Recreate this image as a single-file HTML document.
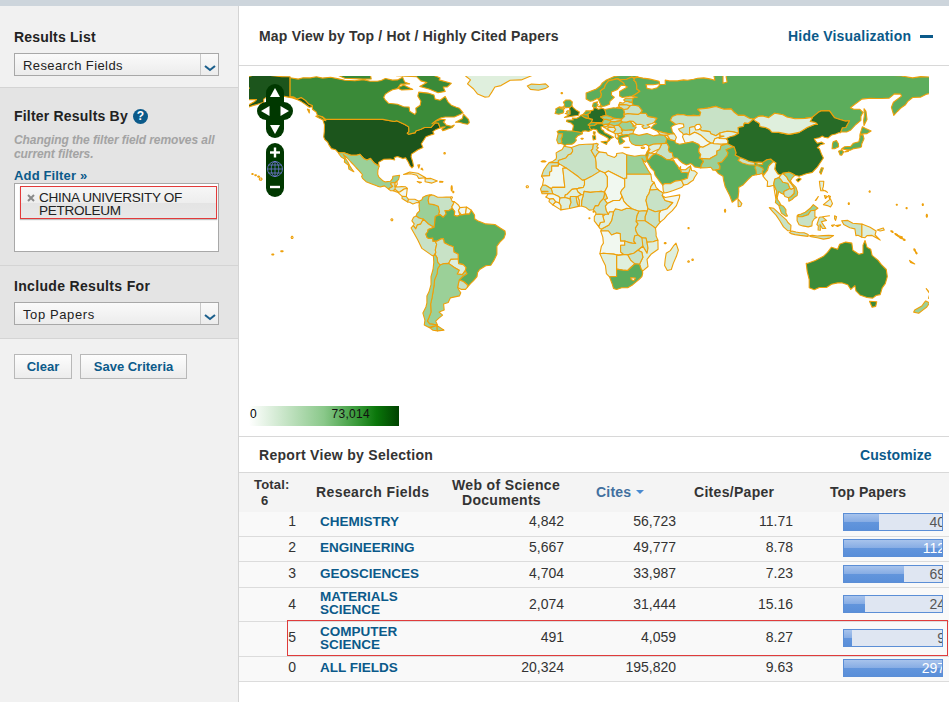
<!DOCTYPE html>
<html><head><meta charset="utf-8"><style>
*{margin:0;padding:0;box-sizing:border-box}
html,body{width:949px;height:702px;overflow:hidden;background:#fff;font-family:"Liberation Sans",sans-serif;color:#333}
.a{position:absolute;white-space:nowrap}
#top{left:0;top:0;width:949px;height:6px;background:#cdd5dc}
#side{left:0;top:6px;width:238px;height:696px;background:#f1f1f1}
#sideb{left:238px;top:6px;width:1px;height:696px;background:#d4d4d4}
.sec2{left:0;top:88px;width:238px;height:250px;background:#e4e4e4}
.hr{height:1px;background:#d4d4d4;left:0;width:238px}
.h{font-size:14px;font-weight:bold;color:#222;line-height:14px}
.sel{height:23px;width:205px;left:14px;border:1px solid #a8a8a8;background:linear-gradient(#fafafa,#ececec);font-size:13px;color:#222}
.sel span{position:absolute;left:8px;top:4px;letter-spacing:0.4px}
.sel i{position:absolute;right:0;top:0;width:18px;height:21px;border-left:1px solid #c8c8c8}
.lnk{color:#0b5a8a;font-weight:bold;font-size:13px;line-height:13px}
.btn{height:25px;border:1px solid #b8b8b8;background:linear-gradient(#fdfdfd,#ececec);color:#0b5a8a;font-weight:bold;font-size:13px;text-align:center}
.mh{font-size:14px;font-weight:bold;color:#333;line-height:14px;letter-spacing:0.2px}
.mhr{left:239px;width:710px;height:1px;background:#d8d8d8}
.th{font-size:14px;font-weight:bold;color:#333;line-height:16px}
.v{font-size:14px;color:#333;line-height:14px;text-align:right}
.f{font-size:13.5px;font-weight:bold;color:#0b5a8a;line-height:13px}
.bar{left:843px;width:100px;height:18px;border:1px solid #5b8ed6;background:#dfe6f2;overflow:hidden}
.bar b{position:absolute;left:0;top:0;bottom:0;background:linear-gradient(#a7c3ec 0%,#86ace4 50%,#6295dc 51%,#5a8fd9 100%)}
.bar span{position:absolute;right:-3px;top:1px;font-size:14px;line-height:14px;color:#555}
</style></head><body>
<div class="a" id="top"></div><div class="a" id="side"></div><div class="a sec2"></div><div class="a" id="sideb"></div><div class="a hr" style="top:87px"></div><div class="a hr" style="top:265px"></div><div class="a hr" style="top:338px"></div><div class="a h" style="left:14px;top:30.1px;letter-spacing:0.2px">Results List</div>
<div class="a sel" style="top:53px"><span>Research Fields</span><i></i></div><div class="a h" style="left:14px;top:109.1px;letter-spacing:0.2px">Filter Results By</div>
<div class="a" style="left:133px;top:109px;width:15px;height:15px;border-radius:50%;background:#0b5a8a;color:#fff;font-size:12px;font-weight:bold;text-align:center;line-height:15px">?</div><div class="a" style="left:14px;top:132.5px;width:210px;white-space:normal;font-size:12px;font-style:italic;font-weight:bold;color:#a3a3a3;line-height:14.5px;letter-spacing:-0.08px">Changing the filter field removes all current filters.</div><div class="a lnk" style="left:14px;top:168.5px;letter-spacing:0.15px">Add Filter »</div>
<div class="a" style="left:14px;top:183px;width:205px;height:69px;background:#fff;border:1px solid #a8a8a8"></div><div class="a h" style="left:14px;top:279.1px;letter-spacing:0.33px">Include Results For</div>
<div class="a sel" style="top:302px"><span style="letter-spacing:0.6px">Top Papers</span><i></i></div><div class="a btn" style="left:14px;top:354px;width:58px;line-height:23px">Clear</div><div class="a btn" style="left:80px;top:354px;width:107px;line-height:23px">Save Criteria</div><svg class="a" style="left:203px;top:62.5px" width="14" height="10"><path d="M2,3 L7,7 L12,3" fill="none" stroke="#1b5f8c" stroke-width="2.1"/></svg><svg class="a" style="left:203px;top:311.5px" width="14" height="10"><path d="M2,3 L7,7 L12,3" fill="none" stroke="#1b5f8c" stroke-width="2.1"/></svg><div class="a mh" style="left:259px;top:29.1px;">Map View by Top / Hot / Highly Cited Papers</div>
<div class="a mh lnkc" style="left:788px;top:29.1px;color:#0b5a8a">Hide Visualization</div>
<div class="a" style="left:920px;top:35px;width:13px;height:3px;background:#0b5a8a"></div><div class="a mhr" style="top:65px"></div><svg class="a" style="left:0;top:0" width="949" height="702" viewBox="0 0 949 702"><defs><clipPath id="mc"><rect x="249" y="76" width="680" height="320"/></clipPath></defs><g clip-path="url(#mc)" stroke="#eea00a" stroke-width="1.1" stroke-linejoin="round"><path fill="#1c551c" d="M323.1,120.6 324.5,124.9 324.3,131.6 323.7,136.9 324.9,139.7 327.6,142.1 328.8,144.6 331.4,148.6 335.7,149.8 338.5,152.9 343.4,152.5 350.9,155.3 356.6,155.3 360.0,154.3 364.1,158.8 366.9,160.0 370.4,158.4 374.2,163.0 379.1,166.3 378.5,162.4 383.9,159.2 390.4,159.0 394.7,160.0 394.3,157.6 397.5,156.5 402.8,158.6 405.6,157.8 408.3,162.0 410.1,165.9 411.9,167.9 413.6,166.1 412.5,161.0 411.1,156.9 411.5,154.1 415.4,151.5 418.0,149.8 422.9,147.4 421.3,143.8 422.7,141.7 425.9,136.7 432.0,134.6 434.0,134.0 432.8,131.6 436.1,129.4 440.1,127.9 438.5,123.3 435.7,122.7 434.0,124.1 431.0,127.5 424.5,127.5 420.9,129.2 415.8,131.0 415.4,132.6 408.7,134.2 407.3,133.2 408.9,131.6 408.7,126.9 404.8,124.5 396.7,120.8 394.3,121.5 382.9,119.4 325.9,119.4ZM290.1,76.8 290.1,96.5 294.1,97.1 297.1,99.1 301.2,97.5 305.5,100.4 308.7,104.0 312.4,105.4 312.4,106.7 309.3,107.3 305.3,104.2 301.2,101.6 298.2,100.0 292.5,97.9 287.0,96.9 279.9,95.5 273.8,97.1 268.8,98.7 269.8,95.1 266.7,97.1 263.7,99.1 263.7,102.2 257.6,104.2 247.5,107.3 241.8,108.5 247.5,105.6 254.6,101.6 256.6,99.6 247.5,99.8 243.4,97.1 240.8,95.5 242.4,92.1 246.4,90.0 249.5,88.0 244.4,87.8 238.3,87.8 235.3,85.8 242.4,83.9 247.5,85.0 247.9,82.9 243.4,81.9 238.3,80.3 245.4,77.4 251.5,75.6 258.2,74.2 267.7,75.2 281.9,76.6Z"/><path fill="#3a8a38" d="M290.1,77.7 298.2,79.1 303.2,77.7 310.3,77.9 316.4,76.8 322.5,78.1 330.6,77.2 338.7,78.9 344.8,80.3 354.9,80.7 363.1,79.7 370.2,81.3 377.3,81.3 381.3,80.5 385.4,78.5 392.5,80.1 397.5,79.9 402.6,77.2 404.6,81.9 409.7,83.9 400.6,84.1 397.5,88.6 392.5,89.8 388.4,92.1 385.4,94.1 383.7,97.3 385.0,99.6 388.4,103.2 397.5,104.2 403.6,106.7 409.1,107.1 409.7,111.3 414.8,114.4 416.2,112.3 415.8,108.3 420.2,105.2 420.9,101.2 417.8,96.1 418.8,92.1 428.0,93.1 434.0,95.1 435.1,99.1 440.1,100.2 445.2,96.5 448.2,102.2 451.3,105.2 456.3,107.3 459.4,108.3 463.0,112.7 460.0,114.6 454.3,117.0 445.2,117.0 441.1,117.8 436.5,120.2 432.0,123.7 435.1,121.5 441.1,119.2 445.2,119.6 444.6,121.1 443.2,121.9 445.0,123.5 446.2,125.1 451.3,126.3 454.3,125.1 452.3,127.5 446.2,129.6 442.8,130.6 441.7,129.0 445.2,126.9 442.2,127.1 440.1,127.9 438.5,123.3 435.7,122.7 434.0,124.1 431.0,127.5 424.5,127.5 420.9,129.2 415.8,131.0 415.4,132.6 408.7,134.2 407.3,133.2 408.9,131.6 408.7,126.9 404.8,124.5 396.7,120.8 394.3,121.5 382.9,119.4 325.9,119.4 322.5,116.8 317.4,115.4 316.4,112.3 312.4,109.3 312.4,106.7 312.4,105.4 308.7,104.0 305.5,100.4 301.2,97.5 297.1,99.1 294.1,97.1 290.1,96.5ZM325.9,120.8 322.5,119.8 315.8,116.2 318.4,115.6 322.9,117.6ZM455.5,122.3 462.4,118.4 463.4,114.2 468.5,119.4 469.3,122.5 467.5,124.3 463.4,123.5 459.4,122.3ZM445.2,91.4 438.1,92.7 429.0,89.0 419.8,86.4 426.9,82.5 420.9,80.9 416.8,76.8 396.5,75.8 393.5,69.7 413.8,69.3 430.0,73.8 440.1,77.9 439.1,79.9 451.3,83.3 447.2,87.0 443.2,87.0ZM371.2,78.9 363.1,79.1 344.8,78.3 334.7,73.8 337.7,71.2 346.8,70.8 365.1,70.4 370.2,73.8ZM322.5,73.8 329.6,74.4 339.7,67.7 324.5,67.7ZM401.6,90.0 412.7,89.4 403.6,85.0 397.5,88.0ZM381.3,74.8 387.4,72.8 383.3,68.7 373.2,69.7 377.3,74.8ZM309.3,109.7 307.3,109.1 309.3,112.9Z"/><path fill="#dfefdd" d="M428.0,60.6 442.2,64.7 458.4,65.7 463.4,73.8 466.5,76.8 470.5,79.9 467.5,83.9 473.6,89.0 477.6,94.1 484.7,97.1 488.8,96.7 491.8,92.1 494.9,87.0 501.0,85.6 510.1,80.3 521.2,79.9 531.4,75.8 531.4,70.8 538.5,64.7 535.4,56.6 515.2,50.5 474.6,51.5 450.3,52.5Z"/><path fill="#c8e2c6" d="M527.3,86.0 531.4,84.1 539.5,84.5 545.6,83.9 548.6,86.6 545.6,88.4 538.5,90.2 530.4,89.4Z"/><path fill="#9bd098" d="M338.5,152.9 343.4,152.5 350.9,155.3 356.6,155.3 360.0,154.3 364.1,158.8 366.9,160.0 370.4,158.4 374.2,163.0 379.1,166.3 377.9,170.1 377.7,174.2 378.9,177.2 383.3,181.1 385.4,181.9 390.4,181.3 392.5,178.6 392.9,176.2 399.6,175.2 398.6,179.3 396.9,181.3 395.1,182.7 391.5,182.7 390.6,183.9 392.7,186.4 389.0,188.4 389.0,189.4 384.4,185.9 380.3,187.0 377.3,186.1 371.2,183.7 366.1,181.7 362.5,178.4 361.6,176.2 362.7,175.0 359.2,170.9 356.0,167.5 353.9,165.1 350.9,162.0 347.2,158.0 343.2,154.5 345.8,159.0 347.9,162.0 349.9,166.1 351.9,169.1 353.9,171.8 352.3,171.1 348.9,169.1 348.3,165.1 344.4,162.0 344.6,159.0 341.4,157.1 339.3,154.5Z"/><path fill="#c8e2c6" d="M389.0,189.4 389.0,188.4 392.7,186.4 390.6,183.9 391.5,182.7 395.1,182.7 395.1,186.6 397.1,187.0 395.1,189.4 393.3,190.8 390.4,190.6Z"/><path fill="#f1f8f0" d="M395.1,182.7 396.9,181.3 397.3,184.3 395.7,186.6 395.1,186.6Z"/><path fill="#dfefdd" d="M395.1,186.6 397.1,187.0 401.6,186.6 405.6,186.8 407.3,188.4 404.2,189.0 400.2,191.8 398.6,192.4 395.1,189.4Z"/><path fill="#dfefdd" d="M395.1,189.4 398.6,192.4 396.5,192.0 393.3,190.8Z"/><path fill="#f1f8f0" d="M407.3,188.4 406.7,193.5 406.3,196.5 402.2,196.3 398.1,192.6 400.2,191.8 404.2,189.0Z"/><path fill="#c8e2c6" d="M406.3,196.5 408.5,199.3 407.7,202.0 402.0,198.5 402.2,196.3Z"/><path fill="#dfefdd" d="M408.5,199.3 414.8,199.3 418.8,201.2 419.4,202.8 416.8,202.6 412.9,204.0 409.7,202.2 407.7,202.0Z"/><path fill="#dfefdd" d="M403.6,174.4 409.7,172.0 417.8,173.2 425.7,177.8 418.8,178.4 416.8,175.2 410.7,173.8ZM425.1,178.6 431.0,178.4 437.3,181.1 432.0,183.1 425.1,181.7Z"/><path fill="#ffffff" d="M417.2,181.5 421.5,182.3 419.8,182.9ZM439.7,181.3 443.0,181.5 442.6,182.3 439.7,182.3ZM417.8,165.1 419.8,164.9 418.8,168.1ZM421.9,168.1 422.9,170.1 420.9,169.1Z"/><path fill="#9bd098" d="M419.4,202.8 418.8,201.2 421.9,199.7 422.9,197.3 425.5,195.9 429.6,194.7 431.4,194.9 429.0,196.5 428.2,200.3 429.0,203.8 433.8,204.6 438.3,206.2 439.5,211.7 438.5,215.1 435.3,216.6 434.2,227.3 432.6,226.5 428.0,223.7 423.3,219.2 419.0,218.0 416.2,216.0 417.0,213.5 419.6,210.9 419.0,205.6Z"/><path fill="#c8e2c6" d="M431.4,194.9 433.6,195.3 437.7,197.3 442.2,197.3 446.2,197.1 450.5,197.1 452.3,201.6 454.3,201.6 453.1,204.6 451.9,206.6 452.3,208.3 448.6,210.7 445.0,210.5 446.2,213.9 443.2,217.2 440.1,214.7 438.5,215.1 439.5,211.7 438.3,206.2 433.8,204.6 429.0,203.8 428.2,200.3 429.0,196.5Z"/><path fill="#f1f8f0" d="M454.3,201.6 458.4,205.0 460.0,207.6 458.4,210.7 459.8,214.9 457.2,216.2 454.3,215.4 454.7,211.5 452.3,208.3 451.9,206.6 453.1,204.6Z"/><path fill="#f1f8f0" d="M460.0,207.6 466.5,207.0 465.5,214.1 461.4,214.9 458.4,210.7Z"/><path fill="#f1f8f0" d="M466.5,207.0 471.4,210.3 469.5,214.1 465.5,214.1Z"/><path fill="#c8e2c6" d="M423.3,219.2 419.0,218.0 416.2,216.0 413.6,217.2 411.9,220.8 414.2,223.9 413.2,225.7 415.8,228.9 417.4,224.9 420.7,224.1Z"/><path fill="#c8e2c6" d="M428.0,223.7 432.6,226.5 434.2,227.3 428.2,229.5 427.6,232.0 425.9,234.0 426.9,237.1 428.6,238.5 432.8,238.1 433.0,241.1 435.1,241.1 436.7,244.2 435.3,250.2 435.9,252.3 433.4,256.1 431.2,254.9 421.9,248.4 417.8,240.1 414.2,233.4 411.1,227.9 413.2,225.7 415.8,228.9 417.4,224.9 420.7,224.1 423.3,219.2Z"/><path fill="#5cad5c" d="M471.4,210.3 474.6,215.1 474.6,218.8 477.6,220.8 485.8,223.9 494.9,224.5 501.0,228.5 505.0,231.0 505.4,234.0 504.0,238.1 499.9,242.1 496.9,246.2 496.9,254.3 493.9,260.4 490.8,265.2 485.8,265.8 479.7,269.5 477.6,272.5 477.0,276.6 473.6,280.7 470.5,283.7 467.5,287.1 467.3,284.7 463.4,281.5 459.2,280.0 463.0,276.2 466.9,273.8 465.3,270.7 465.9,267.5 463.2,264.6 458.6,263.6 458.4,259.4 458.2,254.3 453.9,251.9 453.3,246.8 449.2,245.2 444.2,242.7 443.4,238.7 440.9,238.9 436.7,241.3 435.1,241.1 433.0,241.1 432.8,238.1 428.6,238.5 426.9,237.1 425.9,234.0 427.6,232.0 428.2,229.5 434.2,227.3 435.3,216.6 438.5,215.1 440.1,214.7 443.2,217.2 446.2,213.9 445.0,210.5 448.6,210.7 452.3,208.3 454.7,211.5 454.3,215.4 457.2,216.2 459.8,214.9 461.4,214.9 465.5,214.1 469.5,214.1Z"/><path fill="#c8e2c6" d="M435.1,241.1 436.7,244.2 435.3,250.2 435.9,252.3 435.1,254.5 437.1,257.9 437.7,262.4 440.1,265.0 444.2,263.6 448.6,263.4 450.7,259.4 458.2,259.0 458.2,254.3 453.9,251.9 453.3,246.8 449.2,245.2 444.2,242.7 443.4,238.7 440.9,238.9 436.7,241.3Z"/><path fill="#dfefdd" d="M458.2,259.0 450.7,259.4 448.6,263.4 454.3,267.5 459.2,270.3 457.2,274.0 462.4,274.6 465.3,270.7 465.9,267.5 463.2,264.6 458.6,263.6Z"/><path fill="#c8e2c6" d="M459.2,280.0 463.4,281.5 467.3,284.7 467.5,287.1 465.5,289.4 461.4,289.4 457.6,287.5 458.4,283.7Z"/><path fill="#9bd098" d="M444.2,263.6 440.1,265.0 437.7,268.5 437.1,273.6 434.6,279.6 434.0,285.7 433.0,291.8 432.0,297.9 430.6,304.0 431.0,312.1 429.0,317.2 427.3,321.2 429.6,323.9 436.1,324.7 437.5,324.9 435.7,321.2 438.9,318.2 442.6,315.1 439.1,312.1 444.2,310.1 443.6,304.0 448.2,302.4 450.3,297.9 459.4,295.9 460.8,292.8 459.4,290.8 457.6,287.5 458.4,283.7 459.2,280.0 463.0,276.2 466.9,273.8 465.3,270.7 462.4,274.6 457.2,274.0 459.2,270.3 454.3,267.5 448.6,263.4ZM436.9,325.5 444.0,330.1 437.5,330.9 436.9,329.3Z"/><path fill="#9bd098" d="M435.1,254.5 433.4,256.1 433.8,262.4 433.0,269.5 431.0,276.6 431.0,284.7 429.0,291.8 426.9,295.9 426.9,303.0 425.9,307.0 422.9,313.1 424.9,320.2 424.3,324.9 430.0,327.9 436.9,325.5 436.1,324.7 429.6,323.9 427.3,321.2 429.0,317.2 431.0,312.1 430.6,304.0 432.0,297.9 433.0,291.8 434.0,285.7 434.6,279.6 437.1,273.6 437.7,268.5 440.1,265.0 437.7,262.4 437.1,257.9ZM436.9,325.5 436.9,329.3 437.5,330.9 433.0,330.3 429.0,327.3 433.0,326.3Z"/><path fill="#276b27" d="M564.4,117.4 568.9,116.8 578.6,115.2 579.4,111.9 576.4,110.3 573.0,107.3 571.9,105.6 569.9,107.3 569.5,108.3 569.9,110.7 569.9,114.2 569.5,114.6Z"/><path fill="#5cad5c" d="M571.9,105.6 571.9,105.2 572.3,102.0 569.9,100.0 565.9,100.0 563.4,102.2 564.6,104.6 563.8,106.4 566.3,107.7 569.9,107.3Z"/><path fill="#9bd098" d="M569.9,110.7 567.5,110.7 566.5,111.7 567.5,112.7 565.3,113.5 567.5,114.2 569.5,114.6 569.9,114.2Z"/><path fill="#9bd098" d="M564.8,108.7 563.4,106.9 561.2,107.3 559.8,108.3 561.8,109.1Z"/><path fill="#5cad5c" d="M563.8,111.3 563.2,112.9 558.8,114.2 555.1,113.5 556.1,110.3 555.7,108.9 559.2,106.9 561.2,107.3 559.8,108.3 561.8,109.1 563.4,109.3Z"/><path fill="#3a8a38" d="M581.1,115.2 584.5,117.4 587.8,118.4 592.6,119.4 591.4,122.3 588.2,124.9 590.2,125.7 589.4,127.3 591.4,130.0 588.6,131.4 585.1,130.8 582.3,131.4 582.1,132.8 572.3,131.0 573.6,125.5 570.9,122.9 566.5,121.5 566.9,120.0 573.2,120.0 572.3,118.0 576.4,118.4 579.0,117.0ZM593.4,131.8 595.3,132.0 594.7,134.8 593.4,133.8Z"/><path fill="#5cad5c" d="M582.1,132.8 572.3,131.0 566.9,130.8 559.8,130.2 557.1,131.6 558.2,133.6 562.6,133.8 561.8,137.7 561.0,138.7 561.8,141.7 560.8,143.4 563.2,144.2 564.6,145.8 566.9,144.4 571.9,144.2 574.6,142.5 576.4,140.1 575.4,138.7 577.8,135.7 582.5,133.8Z"/><path fill="#9bd098" d="M558.2,133.6 556.7,140.1 558.2,143.8 560.8,143.4 561.8,141.7 561.0,138.7 561.8,137.7 562.6,133.8Z"/><path fill="#5cad5c" d="M582.9,114.6 585.5,111.5 586.1,110.7 590.6,110.9 590.2,112.9 588.2,113.7 588.2,115.8 587.8,115.0 584.7,114.6Z"/><path fill="#5cad5c" d="M581.1,115.2 582.9,114.6 584.7,114.6 587.8,115.0 588.2,115.8 588.6,117.2 587.8,118.4 584.5,117.4Z"/><path fill="#276b27" d="M588.2,113.7 590.2,112.9 590.6,110.9 593.2,110.1 594.0,107.5 596.1,107.7 598.3,109.3 602.4,108.3 604.8,109.5 605.6,112.1 606.2,115.4 600.7,116.8 604.0,119.4 602.4,122.5 597.3,122.5 595.5,122.5 591.4,122.3 592.6,119.4 589.0,118.4 588.6,117.2 588.2,115.8Z"/><path fill="#5cad5c" d="M592.4,106.2 593.4,103.0 597.5,101.8 596.9,104.2 598.1,104.6 596.1,107.7 594.0,107.5ZM598.3,106.7 601.4,105.2 601.4,107.3Z"/><path fill="#5cad5c" d="M588.2,124.9 591.4,122.3 595.5,122.5 597.1,123.7 594.3,125.5 590.2,125.7Z"/><path fill="#9bd098" d="M595.5,122.5 602.4,122.5 604.0,119.4 606.4,119.4 610.3,120.2 610.7,121.5 609.5,123.5 608.4,124.1 603.8,124.5 600.7,123.5 597.1,123.7Z"/><path fill="#3a8a38" d="M590.2,125.7 594.3,125.5 597.1,123.7 600.7,123.5 603.8,124.5 603.8,126.3 600.9,126.9 601.4,129.4 603.6,130.6 604.4,132.6 608.4,134.6 613.5,137.3 610.5,138.7 609.5,140.3 607.6,141.7 608.4,138.7 607.4,137.7 604.4,136.1 601.4,134.6 598.3,132.6 596.7,129.8 593.2,129.0 591.4,130.0 589.4,127.3ZM601.1,141.7 607.6,141.1 606.6,144.4ZM592.6,135.7 595.5,135.7 595.7,139.3 593.2,139.9Z"/><path fill="#5cad5c" d="M586.1,99.1 590.2,101.2 593.2,100.6 597.3,98.5 598.3,99.4 600.9,97.1 601.4,94.1 600.3,91.0 604.4,88.0 605.4,85.0 608.4,80.9 612.5,79.9 616.6,78.9 620.6,79.7 626.7,79.3 631.8,77.0 634.8,77.9 638.5,77.2 632.8,74.6 624.7,74.8 614.5,76.4 606.4,79.9 602.4,82.9 600.3,86.0 596.3,89.0 591.2,91.0 586.1,93.1 586.1,97.1Z"/><path fill="#5cad5c" d="M598.3,99.4 600.9,105.2 602.4,106.4 605.0,106.0 609.5,104.2 609.9,101.4 614.3,97.3 611.5,95.1 611.5,92.1 617.6,89.4 621.2,85.2 624.7,85.4 623.7,82.9 617.6,78.7 616.6,78.9 612.5,79.9 608.4,80.9 605.4,85.0 604.4,88.0 600.3,91.0 601.4,94.1 600.9,97.1Z"/><path fill="#5cad5c" d="M619.6,96.1 622.4,97.5 629.7,96.3 632.4,96.1 634.8,94.7 639.9,91.2 636.8,89.0 636.8,85.6 635.8,81.9 633.8,80.3 634.6,78.9 631.8,77.0 626.7,79.3 620.6,79.7 617.6,78.7 623.7,82.9 624.7,85.4 627.3,87.0 619.6,91.4Z"/><path fill="#5cad5c" d="M604.8,109.5 613.5,107.7 622.2,108.5 623.7,109.5 624.5,112.3 623.7,114.4 624.7,116.4 621.8,119.2 614.3,118.4 610.5,116.8 606.2,115.4 605.6,112.1Z"/><path fill="#9bd098" d="M600.7,116.8 606.2,115.4 610.5,116.8 614.3,118.4 610.3,120.2 606.4,119.4 604.0,119.4Z"/><path fill="#c8e2c6" d="M610.3,120.2 614.3,118.4 621.8,119.2 621.0,120.6 614.1,121.9 610.7,121.5Z"/><path fill="#9bd098" d="M608.4,124.1 609.5,123.5 610.7,121.5 614.1,121.9 621.0,120.6 622.4,121.7 618.6,125.1 614.1,125.7 609.7,124.5Z"/><path fill="#c8e2c6" d="M603.8,124.5 608.4,124.1 609.7,124.5 606.8,126.5 603.8,126.3Z"/><path fill="#c8e2c6" d="M603.6,127.3 606.8,126.5 609.7,124.5 614.1,125.7 614.5,127.5 608.4,127.1 607.8,129.2 611.5,131.6 613.5,132.6 608.4,130.6 606.2,128.6Z"/><path fill="#dfefdd" d="M607.8,129.2 608.4,127.1 614.5,127.5 615.7,129.6 613.5,132.6 611.5,131.6Z"/><path fill="#c8e2c6" d="M614.1,125.7 618.6,125.1 621.8,128.6 621.4,129.6 622.6,131.2 621.4,133.0 617.8,133.8 615.3,133.8 613.5,132.6 615.7,129.6 614.5,127.5Z"/><path fill="#dfefdd" d="M615.3,133.8 617.8,133.8 618.6,137.7 616.6,138.5 615.3,137.1Z"/><path fill="#dfefdd" d="M617.8,133.8 621.4,133.0 622.6,135.0 618.6,135.9Z"/><path fill="#5cad5c" d="M616.6,138.5 618.6,137.7 618.6,135.9 622.6,135.0 629.3,134.2 628.7,136.1 623.7,137.3 621.6,137.7 622.6,139.7 624.7,141.3 621.6,143.8 619.6,144.2 618.6,141.7 618.6,139.7ZM623.7,147.2 629.3,147.4 625.7,147.8Z"/><path fill="#c8e2c6" d="M621.4,129.6 625.7,130.2 631.8,129.6 634.0,130.2 632.8,133.6 629.3,134.2 622.6,135.0 621.4,133.0 622.6,131.2Z"/><path fill="#9bd098" d="M618.6,125.1 622.4,121.7 626.5,122.1 629.9,121.1 633.2,124.5 633.2,126.5 636.2,127.1 634.0,130.2 631.8,129.6 625.7,130.2 621.4,129.6 621.8,128.6Z"/><path fill="#f1f8f0" d="M629.9,121.1 633.2,121.3 636.8,124.5 633.2,126.5 633.2,124.5Z"/><path fill="#c8e2c6" d="M621.0,120.6 621.8,119.2 624.7,116.4 623.7,114.4 627.7,113.5 637.9,114.4 640.5,113.1 646.0,113.3 648.0,116.4 653.5,117.4 657.1,118.2 654.1,122.5 652.0,123.5 647.0,124.9 650.0,126.9 647.0,128.1 643.9,128.6 641.9,126.7 643.9,125.5 639.9,124.3 636.8,124.5 633.2,121.3 629.9,121.1 626.5,122.1 622.4,121.7Z"/><path fill="#c8e2c6" d="M623.7,114.4 624.5,112.3 623.7,109.5 627.7,108.7 629.9,105.8 633.2,105.0 638.7,106.0 642.3,110.7 640.5,113.1 637.9,114.4 627.7,113.5Z"/><path fill="#c8e2c6" d="M618.6,105.2 619.2,106.9 622.2,108.5 623.7,109.5 627.7,108.7 629.9,105.8 626.7,104.8 620.6,104.4Z"/><path fill="#c8e2c6" d="M618.6,105.2 620.6,104.4 626.7,104.8 629.9,105.8 633.2,105.0 632.2,102.6 627.9,101.4 625.3,101.4 623.3,103.2 619.8,102.4Z"/><path fill="#9bd098" d="M623.7,100.0 625.3,101.4 627.9,101.4 632.2,102.6 632.8,98.1 625.7,98.1Z"/><path fill="#5cad5c" d="M632.8,98.1 632.2,102.6 633.2,105.0 638.7,106.0 642.3,110.7 640.5,113.1 646.0,113.3 648.0,116.4 653.5,117.4 657.1,118.2 654.1,122.5 656.5,123.5 653.5,125.1 652.0,126.9 651.0,127.9 656.1,130.6 657.1,130.8 663.2,132.6 670.3,134.0 674.4,134.0 672.3,131.6 671.7,128.6 670.9,127.9 672.3,126.1 674.4,125.1 676.0,124.5 673.3,122.5 670.3,120.4 672.3,116.4 677.4,114.4 683.5,114.8 687.5,115.8 693.6,115.4 699.7,115.8 700.7,112.3 697.7,109.3 707.8,108.1 715.9,106.4 724.0,109.3 731.1,108.9 734.2,112.3 738.2,115.4 744.3,115.4 749.4,118.2 753.5,119.2 758.5,116.4 762.6,116.0 768.7,117.6 774.7,113.3 782.9,114.8 786.9,117.0 795.0,118.8 805.2,118.4 812.3,117.4 818.3,112.3 821.4,110.7 829.5,110.9 834.6,117.8 840.7,119.8 845.7,121.1 849.4,120.8 845.7,127.5 842.3,127.7 840.7,132.0 841.7,132.0 846.7,132.0 850.8,130.0 855.9,124.5 860.9,120.4 860.9,116.4 863.0,112.3 859.9,109.3 853.8,109.3 850.4,107.7 854.9,104.2 861.9,99.1 870.1,98.3 877.2,98.5 882.2,98.5 889.3,98.1 894.4,93.9 900.5,94.1 901.5,96.1 893.4,102.2 891.4,107.3 893.8,115.4 897.4,111.5 900.5,108.3 905.5,104.8 907.6,101.6 912.6,97.5 920.8,97.1 926.8,94.1 936.0,92.1 939.0,92.5 943.1,87.0 943.1,78.9 932.9,77.2 920.8,76.6 912.6,77.9 900.5,75.8 884.3,75.0 874.1,72.2 859.9,71.8 839.6,74.8 835.6,71.8 823.4,70.8 805.2,69.5 799.1,63.0 778.8,63.7 754.5,66.7 738.2,69.7 739.3,73.8 738.2,71.8 728.1,72.8 726.1,76.8 727.1,81.9 723.0,83.3 723.0,78.9 723.0,72.8 718.0,70.8 713.9,75.8 714.9,80.3 709.8,78.9 703.8,77.9 697.7,78.3 693.6,79.3 687.5,80.3 683.5,79.9 677.4,80.9 669.3,80.9 665.2,80.1 665.2,84.5 660.2,84.5 657.1,87.8 652.0,89.2 647.0,88.4 646.0,84.5 653.1,84.7 659.6,83.7 659.1,81.3 649.0,78.9 642.9,78.1 638.5,77.2 634.8,77.9 634.6,78.9 633.8,80.3 635.8,81.9 636.8,85.6 636.8,89.0 639.9,91.2 634.8,94.7 632.4,96.1 634.8,96.7 637.4,97.2 634.8,97.5ZM864.0,108.7 866.0,111.3 867.0,119.4 864.0,125.5 863.6,120.4 864.4,115.4ZM616.6,107.5 622.2,108.5 619.2,106.9Z"/><path fill="#c8e2c6" d="M670.3,120.4 672.3,116.4 677.4,114.4 683.5,114.8 687.5,115.8 693.6,115.4 699.7,115.8 700.7,112.3 697.7,109.3 707.8,108.1 715.9,106.4 724.0,109.3 731.1,108.9 734.2,112.3 738.2,115.4 744.3,115.4 749.4,118.2 753.5,119.2 748.4,123.5 744.3,123.1 743.3,126.5 738.2,127.5 738.6,133.2 732.2,131.6 727.1,131.2 720.0,133.0 715.9,135.7 710.9,133.8 709.8,131.6 701.7,130.6 694.6,126.5 689.6,127.5 689.6,135.0 686.5,134.0 683.3,134.6 682.5,133.0 680.0,131.2 678.4,129.0 680.0,128.6 683.9,126.9 683.5,124.1 679.4,123.5 676.0,124.5 673.3,122.5Z"/><path fill="#dfefdd" d="M689.6,127.5 694.6,126.5 701.7,130.6 709.8,131.6 710.9,133.8 715.9,135.7 720.0,133.0 720.0,135.7 724.0,136.1 720.0,137.1 714.9,138.7 712.9,143.2 710.9,143.0 706.8,140.7 700.7,135.2 697.7,133.6 694.6,132.2 689.6,135.0Z"/><path fill="#f1f8f0" d="M683.3,134.6 682.5,136.7 683.5,139.1 685.3,143.2 692.6,141.7 698.7,144.6 700.1,146.6 702.8,147.2 706.8,145.2 710.9,143.0 706.8,140.7 700.7,135.2 697.7,133.6 694.6,132.2 689.6,135.0 686.5,134.0Z"/><path fill="#dfefdd" d="M720.0,133.0 727.1,131.2 732.2,131.6 738.6,133.2 734.2,135.7 726.1,138.7 719.0,138.5 720.0,137.1 724.0,136.1 720.0,135.7Z"/><path fill="#f1f8f0" d="M714.9,138.7 720.0,137.1 719.0,138.5 726.1,138.7 728.1,140.7 727.7,143.8 721.0,144.2 713.9,143.8 712.9,143.2Z"/><path fill="#dfefdd" d="M700.1,146.6 702.8,147.2 706.8,145.2 710.9,143.0 712.9,143.2 713.9,143.8 721.0,144.2 727.7,143.8 721.0,145.8 720.0,149.8 716.9,150.9 716.9,154.7 710.9,158.0 709.8,159.0 700.7,158.4 699.3,158.2 700.7,154.9 698.7,151.9 698.7,148.8Z"/><path fill="#9bd098" d="M700.7,158.4 703.4,161.4 701.1,165.1 700.7,167.9 706.8,167.7 710.9,167.3 712.9,170.1 715.5,170.1 719.8,169.1 720.0,166.1 718.0,163.0 722.0,162.0 725.1,158.2 727.1,155.9 728.1,152.9 726.1,149.8 733.8,146.8 727.7,143.8 721.0,145.8 720.0,149.8 716.9,150.9 716.9,154.7 710.9,158.0 709.8,159.0Z"/><path fill="#5cad5c" d="M715.5,170.1 718.0,173.2 723.0,176.2 723.6,180.3 725.1,186.4 727.1,190.4 729.7,195.5 732.2,202.2 734.2,200.8 738.0,197.9 738.8,191.4 738.6,187.4 743.3,184.7 748.0,179.7 752.0,175.8 756.5,174.6 761.6,173.2 763.6,175.2 765.2,173.2 767.6,170.1 768.7,166.1 773.5,161.4 770.7,159.0 766.6,159.8 762.6,162.4 758.1,162.0 754.5,162.4 746.4,163.0 738.2,160.4 740.3,157.6 735.2,154.9 736.2,152.9 734.2,146.8 733.8,146.8 726.1,149.8 728.1,152.9 727.1,155.9 725.1,158.2 722.0,162.0 718.0,163.0 720.0,166.1 719.8,169.1Z"/><path fill="#c8e2c6" d="M738.2,160.4 740.3,157.6 745.3,159.6 749.4,161.4 754.5,162.2 754.5,165.1 748.4,164.7 742.3,163.0Z"/><path fill="#dfefdd" d="M756.5,164.0 758.1,162.0 762.6,162.4 762.6,164.4Z"/><path fill="#9bd098" d="M756.5,174.6 755.9,169.5 754.9,168.1 755.5,165.5 758.1,165.7 762.6,168.1 763.6,170.1 762.2,171.1 763.6,176.2 761.6,173.2 759.5,174.2Z"/><path fill="#c8e2c6" d="M738.0,198.9 741.9,203.6 740.7,206.2 738.2,206.6Z"/><path fill="#276b27" d="M726.1,138.7 728.1,140.7 727.7,143.8 733.8,146.8 734.2,146.8 736.2,152.9 735.2,154.9 740.3,157.6 745.3,159.6 749.4,161.4 754.5,162.2 758.1,162.0 762.6,162.4 766.6,159.8 770.7,159.0 773.5,161.4 775.8,163.0 774.7,169.1 777.8,174.0 780.8,175.2 782.9,173.4 788.9,172.2 792.0,173.6 795.0,175.2 799.1,176.2 802.1,175.2 806.2,173.8 812.3,172.4 817.3,167.1 819.4,164.0 823.4,158.0 821.4,153.9 819.4,148.8 817.3,147.8 820.4,144.8 824.4,143.8 821.4,142.1 817.3,143.2 815.3,140.7 814.3,138.7 819.4,137.7 822.4,136.1 824.4,137.3 828.1,137.9 831.5,135.0 835.6,134.0 838.6,132.8 840.7,132.6 840.7,132.0 842.3,127.7 845.7,127.5 849.4,120.8 845.7,121.1 840.7,119.8 834.6,117.8 829.5,110.9 821.4,110.7 818.3,112.3 812.3,117.4 812.3,117.8 810.2,121.5 815.3,122.5 817.3,124.5 814.3,124.5 807.2,127.5 802.1,130.6 799.1,132.4 793.0,133.6 788.9,134.4 778.8,132.4 771.7,132.0 769.7,129.6 765.6,127.5 759.9,126.5 759.5,123.5 754.5,120.4 753.5,119.2 748.4,123.5 744.3,123.1 743.3,126.5 738.2,127.5 738.6,133.2 734.2,135.7 730.1,136.7ZM796.2,179.9 799.1,178.0 801.1,179.1 798.1,181.9Z"/><path fill="#dfefdd" d="M754.1,119.0 758.5,116.4 762.6,116.0 768.7,117.6 774.7,113.3 782.9,114.8 786.9,117.0 795.0,118.8 805.2,118.4 812.3,117.4 812.3,117.8 810.2,121.5 815.3,122.5 817.3,124.5 814.3,124.5 807.2,127.5 802.1,130.6 799.1,132.4 793.0,133.6 788.9,134.4 778.8,132.4 771.7,132.0 769.7,129.6 765.6,127.5 759.9,126.5 759.5,123.5 754.5,120.4Z"/><path fill="#5cad5c" d="M833.2,141.7 836.4,140.5 838.4,143.8 838.6,146.8 834.6,148.8 832.1,148.8 832.5,143.8Z"/><path fill="#5cad5c" d="M841.7,148.8 844.7,146.8 850.8,146.4 853.4,143.2 858.9,141.7 859.9,137.7 859.9,135.0 863.0,135.0 864.0,138.7 861.7,144.0 861.5,146.8 859.5,147.8 853.8,148.6 850.2,150.3 844.7,149.4ZM838.6,151.3 841.7,149.8 843.7,151.9 841.7,155.3 840.0,154.9ZM844.7,151.9 849.2,149.4 848.2,151.5ZM859.9,134.6 862.4,126.7 865.6,128.4 871.1,131.0 867.0,133.6 861.9,134.0Z"/><path fill="#5cad5c" d="M821.4,167.7 823.4,168.1 821.0,174.2 819.6,172.2Z"/><path fill="#ffffff" d="M694.6,126.5 696.7,124.5 699.7,124.3 701.3,127.5 698.7,129.6 695.7,130.0Z"/><path fill="#f1f8f0" d="M763.0,176.2 765.2,173.2 767.6,170.1 768.7,166.1 773.5,161.4 775.8,163.0 774.7,169.1 777.8,174.0 780.8,175.2 779.0,177.4 774.7,179.3 773.7,184.3 775.1,187.4 776.8,191.4 776.0,198.5 775.8,198.5 774.7,192.4 773.7,185.3 769.7,186.4 767.2,186.4 767.6,181.3 765.6,179.3Z"/><path fill="#9bd098" d="M779.0,177.4 780.8,179.3 782.9,182.3 787.9,183.3 790.0,188.4 783.9,191.4 783.9,194.5 780.8,193.0 778.8,191.4 777.2,197.5 777.8,200.1 779.4,202.0 780.8,205.0 779.0,205.6 775.4,202.6 776.0,198.5 776.8,191.4 775.1,187.4 773.7,184.3 774.7,179.3Z"/><path fill="#dfefdd" d="M779.0,177.4 780.8,175.2 782.9,173.4 786.9,177.2 787.9,179.3 791.0,183.3 794.2,188.0 791.0,189.4 790.0,188.4 787.9,183.3 782.9,182.3 780.8,179.3Z"/><path fill="#9bd098" d="M782.9,173.4 788.9,172.2 792.0,173.6 795.0,175.2 792.0,178.2 790.4,180.7 792.0,183.3 796.0,187.4 797.7,192.4 797.1,195.5 794.0,197.5 792.0,199.5 788.9,201.2 788.5,197.7 791.0,196.5 794.0,193.5 794.2,188.0 791.0,183.3 787.9,179.3 786.9,177.2Z"/><path fill="#c8e2c6" d="M783.9,194.5 784.9,196.5 788.5,197.7 791.0,196.5 794.0,193.5 794.2,188.0 791.0,189.4 790.0,188.4 783.9,191.4Z"/><path fill="#9bd098" d="M779.0,205.6 780.8,205.0 783.3,206.2 785.9,209.7 785.9,213.1 787.5,216.0 785.9,216.2 781.4,213.1 779.4,207.6ZM798.3,214.7 801.1,214.1 805.2,212.3 810.2,208.3 813.3,204.6 817.9,208.3 814.9,210.3 810.8,210.7 808.2,214.7 802.1,216.8 798.3,216.8Z"/><path fill="#c8e2c6" d="M797.1,215.8 798.3,214.7 798.3,216.8 802.1,216.8 808.2,214.7 810.8,210.7 814.9,210.3 814.9,216.8 816.9,217.2 814.3,218.8 812.3,221.8 811.9,225.9 808.2,226.9 802.7,225.9 799.1,224.7 797.1,220.8ZM769.3,207.6 773.7,208.3 779.4,213.7 786.3,219.8 787.9,222.5 791.0,225.3 790.6,230.6 787.9,230.8 783.5,226.9 779.8,220.8 776.2,215.4 772.7,211.7ZM789.3,232.6 792.0,231.0 796.0,232.0 800.1,232.8 804.1,232.8 808.2,234.4 808.0,236.4 800.1,235.4 795.0,234.6 791.0,233.6ZM818.1,230.0 820.4,230.2 820.0,224.5 822.4,228.5 825.8,228.5 823.4,224.9 821.4,221.8 826.5,220.4 822.4,216.8 829.5,215.8 819.4,217.2 818.8,218.8 816.9,224.5 818.3,225.9ZM809.2,235.8 812.3,235.4 817.3,236.0 823.4,235.6 828.5,235.4 833.6,235.6 829.5,238.1 823.4,239.1 817.3,237.7 811.2,236.8ZM834.6,215.8 836.6,216.8 835.6,220.4 834.6,218.8ZM831.5,225.3 834.6,224.9 832.5,226.5ZM835.6,225.5 840.7,224.9 837.6,226.5ZM841.7,220.8 847.8,220.4 852.8,223.3 861.9,224.1 861.9,237.3 857.9,235.2 855.9,235.6 854.9,228.9 849.8,227.7 843.7,224.5Z"/><path fill="#dfefdd" d="M861.9,224.1 870.1,227.3 876.1,231.0 875.1,235.0 880.2,240.1 872.1,235.4 867.0,235.6 865.0,237.7 861.9,237.3ZM877.2,230.0 883.2,227.9 884.3,230.0 880.2,231.0Z"/><path fill="#dfefdd" d="M819.4,181.3 823.8,181.3 823.4,186.4 822.4,189.4 827.5,192.4 825.4,190.8 820.8,190.8 820.0,186.4ZM823.4,204.6 830.5,198.9 832.5,203.6 830.5,207.0 827.5,205.6ZM824.4,195.5 827.5,196.5 825.4,198.5ZM828.5,195.5 830.5,196.5 829.5,198.5ZM815.3,200.5 818.3,196.5 816.3,200.1Z"/><path fill="#9bd098" d="M629.3,134.2 632.8,133.6 638.9,135.4 647.0,133.6 653.7,135.9 660.2,134.6 664.4,135.4 666.9,138.3 665.8,143.4 661.8,143.6 653.1,144.2 650.0,145.4 649.0,146.2 646.0,144.2 641.9,145.6 635.8,145.4 631.8,143.8 629.7,140.7 629.3,137.7 628.7,136.1Z"/><path fill="#c8e2c6" d="M657.1,130.8 663.2,132.6 670.3,134.0 667.3,135.2 664.4,135.4 660.2,134.6Z"/><path fill="#dfefdd" d="M664.4,135.4 667.3,135.2 670.3,139.9 666.9,138.3Z"/><path fill="#dfefdd" d="M667.3,135.2 670.3,134.0 674.4,134.0 676.4,137.3 675.0,140.9 670.3,139.9Z"/><path fill="#5cad5c" d="M666.9,138.3 670.3,139.9 675.0,140.9 675.4,142.8 679.4,144.2 685.3,143.2 692.6,141.7 698.7,144.6 700.1,146.6 698.7,148.8 698.7,151.9 700.7,154.9 699.3,158.2 700.7,158.4 703.4,161.4 701.1,165.1 700.7,167.9 694.6,166.9 692.2,164.4 690.6,163.6 686.5,165.1 682.5,163.0 679.0,160.0 677.4,158.0 674.4,158.0 673.3,156.9 672.7,155.9 672.3,152.9 669.3,151.9 668.3,149.8 668.9,146.8 666.9,143.4 665.8,143.4Z"/><path fill="#c8e2c6" d="M661.8,143.6 665.8,143.4 666.9,143.4 668.9,146.8 668.3,149.8 669.3,151.9 672.3,152.9 672.7,155.9 673.3,156.9 674.4,158.0 672.3,158.2 670.3,159.8 666.7,159.6 661.2,155.9 655.5,153.5 659.1,149.0 659.6,148.2Z"/><path fill="#dfefdd" d="M650.0,145.4 653.1,144.2 661.8,143.6 659.6,148.2 659.1,149.0 654.7,151.1 650.6,153.3 648.6,152.3 648.8,148.4 648.6,146.2Z"/><path fill="#c8e2c6" d="M648.0,152.9 650.6,153.3 655.5,153.5 653.1,154.9 651.0,156.9 649.0,159.6 647.0,159.0 648.0,154.9Z"/><path fill="#5cad5c" d="M645.6,155.3 647.0,159.0 648.0,154.9 648.0,151.3 647.0,151.9Z"/><path fill="#c8e2c6" d="M647.2,151.7 648.0,151.3 650.2,149.4 649.0,148.4Z"/><path fill="#5cad5c" d="M649.0,159.6 651.0,156.9 653.1,154.9 655.5,153.5 661.2,155.9 666.7,159.6 670.3,159.8 674.2,161.0 675.2,162.8 677.8,166.1 679.0,168.7 680.4,169.5 681.5,172.2 688.6,172.8 687.5,178.2 681.5,180.3 675.4,181.1 670.3,183.7 665.2,183.5 663.8,184.3 662.8,185.5 661.2,183.3 658.1,179.3 655.1,175.2 654.1,171.1 651.0,168.1 648.0,163.0 646.4,161.0 647.0,159.0Z"/><path fill="#dfefdd" d="M662.8,185.5 663.2,190.4 664.2,193.0 667.3,192.4 673.3,190.4 681.9,187.2 683.7,185.1 681.5,180.3 675.4,181.1 670.3,183.7 665.2,183.5 663.8,184.3Z"/><path fill="#dfefdd" d="M681.5,180.3 687.5,178.2 688.6,172.8 689.6,169.1 690.4,165.5 691.6,170.5 694.6,170.9 697.3,173.2 694.6,177.2 693.2,180.3 690.8,181.7 687.5,184.3 683.7,185.1Z"/><path fill="#c8e2c6" d="M680.4,169.5 685.5,169.7 689.6,166.5 690.4,168.3 688.6,172.8 681.5,172.2Z"/><path fill="#c8e2c6" d="M679.0,168.7 680.6,166.5 680.6,168.9ZM672.3,158.2 674.2,161.0 670.3,159.8Z"/><path fill="#c8e2c6" d="M564.0,146.2 571.5,147.6 572.6,149.8 572.6,151.5 570.9,153.9 568.5,154.7 565.9,158.0 558.4,160.6 558.4,162.6 549.2,162.6 552.7,161.4 556.1,159.0 556.5,156.9 556.1,152.9 558.8,151.3 562.2,149.4Z"/><path fill="#c8e2c6" d="M558.4,162.6 549.2,162.6 546.6,165.7 543.6,170.1 541.5,176.2 549.6,175.6 549.6,172.2 551.7,171.1 551.7,166.1 558.4,166.1Z"/><path fill="#c8e2c6" d="M571.5,147.6 579.0,144.8 586.1,144.2 593.4,144.0 592.8,148.8 591.2,150.5 595.3,157.4 596.1,162.0 596.3,168.1 600.1,171.1 591.2,176.6 584.5,179.9 582.5,180.3 578.4,176.8 566.3,168.1 558.4,163.4 558.4,162.6 558.4,160.6 565.9,158.0 568.5,154.7 570.9,153.9 572.6,151.5 572.6,149.8Z"/><path fill="#c8e2c6" d="M593.4,144.0 596.9,143.4 598.3,144.2 596.7,146.8 598.3,147.8 596.3,149.8 599.3,151.9 596.9,154.5 595.3,157.4 591.2,150.5 592.8,148.8Z"/><path fill="#dfefdd" d="M599.3,151.9 606.4,152.9 607.4,154.9 614.5,157.4 616.6,155.5 616.6,153.5 622.6,152.7 626.7,154.7 626.7,174.2 626.7,178.2 624.7,178.2 624.7,179.3 608.4,171.1 604.8,173.0 600.1,171.1 596.3,168.1 596.1,162.0 595.3,157.4 596.9,154.5Z"/><path fill="#9bd098" d="M626.7,154.7 634.8,156.3 640.9,155.3 645.6,155.3 646.8,159.0 645.4,162.4 643.9,161.0 641.9,158.4 643.9,163.0 648.0,170.1 650.8,174.2 626.7,174.2Z"/><path fill="#f1f8f0" d="M541.5,176.2 543.6,179.3 542.5,185.3 545.6,185.3 551.3,188.8 552.7,187.2 564.8,187.4 564.6,185.3 562.8,168.3 566.3,168.1 558.4,163.4 558.4,166.1 551.7,166.1 551.7,171.1 549.6,172.2 549.6,175.6Z"/><path fill="#dfefdd" d="M551.3,188.8 552.7,193.7 558.8,196.5 559.8,198.1 564.8,197.5 565.3,194.9 566.9,194.5 571.9,189.4 576.4,188.6 578.0,188.4 583.3,187.4 584.5,184.7 584.5,179.9 582.5,180.3 578.4,176.8 566.3,168.1 562.8,168.3 564.6,185.3 564.8,187.4 552.7,187.2Z"/><path fill="#dfefdd" d="M576.4,188.6 578.0,192.0 581.1,194.5 583.3,195.1 584.1,191.4 590.2,192.4 596.3,191.8 601.4,191.4 604.4,192.2 607.4,186.4 607.4,176.6 604.8,173.0 600.1,171.1 591.2,176.6 584.5,179.9 584.5,184.7 583.3,187.4 578.0,188.4Z"/><path fill="#f1f8f0" d="M604.8,173.0 608.4,171.1 624.7,179.3 624.7,187.0 621.6,190.4 620.6,192.8 622.2,196.5 619.6,200.5 613.5,200.5 607.4,203.6 604.4,199.5 607.4,198.5 605.4,193.5 604.4,192.2 607.4,186.4 607.4,176.6Z"/><path fill="#dfefdd" d="M624.7,179.3 624.7,178.2 626.7,178.2 626.7,174.2 650.8,174.2 652.0,181.3 654.1,182.3 651.0,186.4 650.0,189.8 649.0,193.5 647.0,196.5 646.0,200.5 648.0,208.7 647.0,211.3 644.5,210.7 638.9,211.3 631.8,208.7 626.7,204.6 623.7,201.2 622.2,196.5 620.6,192.8 621.6,190.4 624.7,187.0Z"/><path fill="#dfefdd" d="M650.0,189.8 651.0,186.4 654.1,182.3 656.1,187.4 660.2,191.4 663.2,193.0 657.1,189.4 652.0,190.0Z"/><path fill="#c8e2c6" d="M650.0,189.8 652.0,190.0 657.1,189.4 663.2,193.0 662.2,195.5 665.2,200.5 672.9,202.6 667.3,208.7 660.8,210.7 655.1,211.7 648.0,208.7 646.0,200.5 647.0,196.5 649.0,193.5Z"/><path fill="#f1f8f0" d="M662.2,195.5 665.2,197.5 679.8,194.9 679.4,197.7 676.4,205.6 672.3,210.7 667.3,215.1 664.2,218.8 660.2,222.2 659.1,220.8 659.1,213.1 660.8,210.7 667.3,208.7 672.9,202.6 665.2,200.5Z"/><path fill="#c8e2c6" d="M660.2,222.2 657.1,225.9 655.5,228.3 652.5,225.9 645.0,220.8 645.0,216.8 647.0,211.3 648.0,208.7 655.1,211.7 660.8,210.7 659.1,213.1 659.1,220.8Z"/><path fill="#c8e2c6" d="M636.0,221.6 645.0,220.8 645.0,216.8 647.0,211.3 644.5,210.7 638.9,211.3 636.8,215.8Z"/><path fill="#c8e2c6" d="M636.0,221.6 637.9,220.8 645.0,220.8 652.5,225.9 655.5,228.3 656.1,233.0 656.1,236.0 657.9,240.1 653.1,241.7 647.0,242.3 646.0,238.1 641.9,237.7 637.9,235.0 635.8,231.0 635.4,227.9 637.9,223.9Z"/><path fill="#c8e2c6" d="M600.7,231.0 602.4,228.5 608.9,224.9 611.5,220.8 612.9,214.7 613.5,211.7 615.5,208.7 621.6,210.3 626.7,208.3 631.8,208.7 638.9,211.3 636.8,215.8 636.0,221.6 637.9,223.9 635.4,227.9 635.8,231.0 637.9,235.0 634.6,236.0 633.8,241.1 635.8,243.5 631.8,243.1 627.7,242.1 624.7,241.1 620.6,241.1 620.2,233.6 616.6,233.0 611.5,235.0 608.4,231.0Z"/><path fill="#dfefdd" d="M598.7,226.7 600.3,228.9 602.4,228.5 608.9,224.9 611.5,220.8 612.9,214.7 613.5,211.7 609.5,211.7 605.4,214.3 602.8,216.2 604.4,221.8 600.3,222.5Z"/><path fill="#dfefdd" d="M594.3,216.8 595.9,214.3 598.9,214.1 602.8,214.3 602.8,216.2 604.4,221.8 600.3,222.5 598.7,226.7 594.3,220.8Z"/><path fill="#c8e2c6" d="M593.2,209.7 595.9,212.7 595.9,214.3 598.9,214.1 602.8,214.3 608.4,214.3 606.4,210.7 605.4,206.2 607.4,203.6 604.4,199.5 607.4,198.5 605.4,193.5 604.4,192.2 604.4,194.5 603.4,198.5 600.3,201.6 598.3,205.6 595.3,205.6Z"/><path fill="#f1f8f0" d="M605.4,206.2 606.4,210.7 608.4,214.3 609.5,211.7 613.5,211.7 615.5,208.7 621.6,210.3 626.7,208.3 631.8,208.7 626.7,204.6 623.7,201.2 622.2,196.5 619.6,200.5 613.5,200.5 607.4,203.6Z"/><path fill="#c8e2c6" d="M581.5,206.0 586.1,207.6 589.2,210.1 593.2,209.7 595.3,205.6 598.3,205.6 600.3,201.6 603.4,198.5 604.4,194.5 604.4,192.2 601.4,191.4 596.3,191.8 590.2,192.4 584.1,191.4 583.3,195.1 581.7,200.5Z"/><path fill="#dfefdd" d="M579.2,206.2 581.5,206.0 581.7,200.5 583.3,195.1 581.1,194.5 577.6,196.5 579.2,200.5Z"/><path fill="#dfefdd" d="M578.4,206.4 579.2,206.2 579.2,200.5 577.6,196.5 576.0,196.5 577.0,202.6Z"/><path fill="#c8e2c6" d="M569.5,208.5 578.4,206.4 577.0,202.6 576.0,196.5 570.3,196.5 570.9,202.6 569.5,206.2Z"/><path fill="#dfefdd" d="M564.8,197.5 569.9,198.9 570.3,196.5 576.0,196.5 577.6,196.5 581.1,194.5 578.0,192.0 576.4,188.6 571.9,189.4 566.9,194.5 565.3,194.9Z"/><path fill="#dfefdd" d="M560.8,209.9 569.5,208.5 569.5,206.2 570.9,202.6 569.9,198.9 564.8,197.5 559.8,198.1 559.2,203.0 560.8,205.6Z"/><path fill="#f1f8f0" d="M552.7,204.8 560.8,209.9 560.8,205.6 559.2,203.0 555.7,201.6Z"/><path fill="#dfefdd" d="M549.0,201.6 552.7,204.8 555.7,201.6 553.3,198.5 549.6,198.9Z"/><path fill="#f1f8f0" d="M545.6,196.9 549.6,198.9 553.3,198.5 555.7,201.6 559.2,203.0 559.8,198.1 558.8,196.5 552.7,193.7 548.2,193.5 546.6,196.5Z"/><path fill="#c8e2c6" d="M540.5,189.0 542.5,185.3 545.6,185.3 551.3,188.8 552.7,193.7 548.2,193.5 542.1,193.7Z"/><path fill="#ffffff" d="M541.9,191.2 548.0,191.2 548.0,191.8 541.9,192.0Z"/><path fill="#f1f8f0" d="M599.9,253.7 601.4,246.2 603.4,243.1 602.8,237.1 600.7,231.0 608.4,231.0 611.5,235.0 616.6,233.0 620.2,233.6 620.6,241.1 624.7,241.1 624.7,245.2 620.6,245.2 620.6,251.9 623.7,254.5 618.6,255.3 613.5,254.1 603.4,253.3Z"/><path fill="#c8e2c6" d="M620.6,245.2 624.7,245.2 624.7,241.1 627.7,242.1 631.8,243.1 635.8,243.5 633.8,241.1 634.6,236.0 637.9,235.0 641.9,237.7 643.9,241.1 642.9,246.2 637.9,250.2 633.8,253.3 627.7,254.9 623.7,254.5 620.6,251.9Z"/><path fill="#c8e2c6" d="M641.9,237.7 646.0,238.1 647.0,242.3 648.0,248.2 647.0,253.3 642.9,246.2Z"/><path fill="#dfefdd" d="M657.9,240.1 658.1,249.2 651.0,254.3 647.0,259.4 648.0,266.5 642.5,271.1 640.9,268.5 639.5,264.2 642.9,257.3 641.9,252.3 637.9,250.2 642.9,246.2 647.0,253.3 648.0,248.2 647.0,242.3 653.1,241.7Z"/><path fill="#c8e2c6" d="M627.7,254.9 633.8,253.3 637.9,250.2 641.9,252.3 642.9,257.3 639.5,264.2 634.8,263.8 630.8,260.4Z"/><path fill="#dfefdd" d="M616.6,263.4 616.6,255.3 618.6,255.3 623.7,254.5 627.7,254.9 630.8,260.4 634.8,263.8 630.8,267.5 627.7,270.5 622.6,270.1 616.6,269.1Z"/><path fill="#dfefdd" d="M599.9,253.7 603.4,253.3 613.5,254.1 618.6,255.3 623.7,254.5 616.6,255.3 616.6,263.4 616.6,269.1 616.6,276.4 609.5,276.8 606.4,273.6 605.4,265.4 602.4,259.4Z"/><path fill="#5cad5c" d="M609.5,276.8 616.6,276.4 616.6,269.1 622.6,270.1 627.7,270.5 630.8,267.5 634.8,263.8 639.5,264.2 640.9,268.5 642.5,271.1 642.7,273.4 641.9,276.6 638.9,279.6 632.8,284.7 627.7,287.8 621.6,287.8 616.6,289.4 613.5,288.4 612.1,283.7Z"/><path fill="#ffffff" d="M630.8,277.6 635.6,278.0 633.8,280.7 631.2,279.6Z"/><path fill="#dfefdd" d="M676.0,243.1 678.4,250.2 676.4,256.3 673.3,263.4 671.3,269.5 667.3,270.5 664.6,265.4 665.2,259.4 666.2,253.3 670.3,250.6 673.3,246.2Z"/><path fill="#3a8a38" d="M806.2,263.4 807.2,271.5 809.2,279.6 809.2,287.8 814.3,289.8 819.4,287.5 826.5,287.5 831.5,284.3 837.6,282.9 841.7,282.7 847.8,284.7 850.8,289.4 854.9,285.7 855.9,290.8 859.9,294.9 867.0,297.5 872.7,298.1 876.1,295.5 880.2,294.6 882.2,287.8 885.3,283.7 887.3,276.6 886.3,269.5 881.2,264.4 878.2,260.4 872.1,255.3 870.7,249.2 867.0,247.2 865.0,240.5 863.0,245.2 863.0,253.3 858.9,254.3 852.8,250.2 851.8,243.1 845.7,242.1 839.6,244.2 837.6,249.2 831.5,247.2 827.5,252.3 823.4,256.3 815.3,260.4 807.2,263.4ZM869.5,301.3 876.8,301.7 875.7,306.4 872.1,307.2Z"/><path fill="#9bd098" d="M926.2,288.6 929.9,292.8 932.7,294.9 938.0,295.3 936.0,298.9 931.9,303.0 930.1,302.6 929.9,298.9 928.5,298.3 929.9,293.8ZM925.8,300.9 929.5,303.0 926.8,307.0 922.8,310.1 918.7,313.3 913.7,312.1 914.7,310.1 921.8,306.0 924.8,301.9Z"/><path fill="#ffffff" d="M910.6,262.4 914.7,264.0 909.6,260.4ZM936.0,254.3 938.0,255.3 936.0,255.9ZM896.4,235.0 900.5,238.1 902.5,237.1Z"/><path fill="#ffffff" d="M262.1,179.1 261.4,178.0 259.9,178.0 259.2,179.1 259.9,180.1 261.4,180.1ZM259.6,176.6 259.1,176.1 258.1,176.1 257.6,176.6 258.1,177.1 259.1,177.1ZM256.4,175.2 256.0,174.7 255.2,174.7 254.8,175.2 255.2,175.7 256.0,175.7ZM253.3,174.0 252.9,173.5 252.1,173.5 251.7,174.0 252.1,174.5 252.9,174.5ZM293.1,237.5 292.6,236.4 291.6,236.4 291.1,237.5 291.6,238.5 292.6,238.5ZM273.8,254.5 273.3,254.0 272.3,254.0 271.8,254.5 272.3,255.0 273.3,255.0ZM283.2,251.2 282.5,250.7 281.3,250.7 280.7,251.2 281.3,251.8 282.5,251.8ZM528.5,186.8 527.9,185.7 526.7,185.7 526.1,186.8 526.7,187.8 527.9,187.8ZM546.0,161.4 544.8,160.9 542.3,160.9 541.1,161.4 542.3,161.9 544.8,161.9ZM445.4,153.3 445.0,152.6 444.2,152.6 443.8,153.3 444.2,154.0 445.0,154.0ZM392.9,219.8 392.4,218.9 391.4,218.9 390.8,219.8 391.4,220.7 392.4,220.7ZM562.6,93.1 562.2,92.5 561.4,92.5 561.0,93.1 561.4,93.6 562.2,93.6ZM452.3,188.4 452.0,185.7 451.4,185.7 451.1,188.4 451.4,191.0 452.0,191.0ZM452.5,197.5 452.0,196.8 451.0,196.8 450.5,197.5 451.0,198.2 452.0,198.2ZM453.9,192.0 453.6,191.3 453.0,191.3 452.7,192.0 453.0,192.7 453.6,192.7ZM693.4,259.8 693.0,259.1 692.2,259.1 691.8,259.8 692.2,260.5 693.0,260.5ZM689.4,261.6 689.0,260.9 688.1,260.9 687.7,261.6 688.1,262.3 689.0,262.3ZM666.2,243.1 665.7,242.6 664.7,242.6 664.2,243.1 664.7,243.7 665.7,243.7ZM689.2,228.1 688.9,227.6 688.2,227.6 687.9,228.1 688.2,228.7 688.9,228.7ZM725.7,210.7 725.4,209.3 724.8,209.3 724.4,210.7 724.8,212.1 725.4,212.1ZM893.1,232.4 892.8,231.5 891.7,230.7 890.8,230.8 891.1,231.6 892.3,232.4ZM898.1,235.8 897.6,234.8 895.9,233.6 894.8,233.5 895.3,234.5 897.0,235.6ZM902.5,238.5 901.9,237.6 900.3,236.8 899.3,236.8 899.8,237.7 901.4,238.6ZM905.2,240.3 904.9,239.5 903.8,238.9 903.1,239.1 903.3,239.9 904.4,240.4ZM915.2,249.7 914.4,248.8 913.8,249.1 914.1,250.3 915.0,251.3 915.5,251.0ZM916.8,252.6 916.1,251.8 915.5,252.1 915.8,253.2 916.5,253.9 917.1,253.6ZM938.6,254.9 937.8,254.0 936.2,254.0 935.4,254.9 936.2,255.8 937.8,255.8ZM870.3,191.6 870.0,190.9 869.4,190.9 869.0,191.6 869.4,192.3 870.0,192.3ZM849.4,203.6 849.1,202.7 848.5,202.7 848.2,203.6 848.5,204.5 849.1,204.5ZM897.4,204.8 897.1,204.3 896.5,204.3 896.2,204.8 896.5,205.3 897.1,205.3ZM907.2,208.1 906.9,207.5 906.3,207.5 906.0,208.1 906.3,208.6 906.9,208.6ZM923.4,204.6 923.1,203.7 922.5,203.7 922.2,204.6 922.5,205.5 923.1,205.5ZM927.5,215.8 927.1,214.4 926.5,214.4 926.2,215.8 926.5,217.2 927.1,217.2ZM644.7,147.8 643.8,147.1 642.0,147.1 641.1,147.8 642.0,148.5 643.8,148.5ZM583.3,138.7 582.7,138.2 581.5,138.2 580.9,138.7 581.5,139.2 582.7,139.2ZM594.3,211.7 593.9,211.2 593.3,211.2 593.0,211.7 593.3,212.2 593.9,212.2ZM590.0,218.2 589.7,217.7 589.1,217.7 588.8,218.2 589.1,218.7 589.7,218.7Z"/></g><g fill="#003800">
<rect x="266" y="84" width="18" height="54" rx="9"/>
<rect x="257" y="102" width="36" height="18" rx="9"/>
<rect x="266" y="143" width="18" height="54" rx="9"/>
</g>
<g fill="#fff">
<path d="M275,88 L280,97 L270,97Z"/>
<path d="M275,134 L280,125 L270,125Z"/>
<path d="M261,111 L269.5,106 L269.5,116Z"/>
<path d="M289,111 L280.5,106 L280.5,116Z"/>
<rect x="273.8" y="147.5" width="2.4" height="10"/>
<rect x="270" y="151.3" width="10" height="2.4"/>
<rect x="270" y="185.8" width="10" height="2.4"/>
</g>
<g fill="none" stroke="#8080f0" stroke-width="0.7">
<circle cx="275" cy="169" r="7.5"/>
<ellipse cx="275" cy="169" rx="3.8" ry="7.5"/>
<line x1="275" y1="161.5" x2="275" y2="176.5"/>
<line x1="267.5" y1="169" x2="282.5" y2="169"/>
<path d="M268.5,165 H281.5 M268.5,173 H281.5"/>
</g>
<defs><linearGradient id="lg" x1="0" x2="1"><stop offset="0" stop-color="#ffffff"/><stop offset="0.5" stop-color="#8ac88a"/><stop offset="0.72" stop-color="#399a39"/><stop offset="0.85" stop-color="#0a760a"/><stop offset="1" stop-color="#004200"/></linearGradient></defs><rect x="249" y="406" width="150" height="20" fill="url(#lg)"/><text x="250" y="418" font-family="Liberation Sans" font-size="12" fill="#000">0</text><text x="331.5" y="418" font-family="Liberation Sans" font-size="12" letter-spacing="0.3" fill="#111">73,014</text></svg><div class="a mhr" style="top:436px"></div><div class="a mh" style="left:259px;top:448.1px;letter-spacing:0.3px">Report View by Selection</div>
<div class="a mh" style="left:860px;top:448.1px;color:#0b5a8a;letter-spacing:0.1px">Customize</div>
<div class="a mhr" style="top:472px"></div><div class="a" style="left:239px;top:473px;width:710px;height:39px;background:#f4f4f4"></div><div class="a" style="left:239px;top:512px;width:710px;height:170px;background:#f9f9f9"></div><div class="a" style="left:239px;top:536px;width:710px;height:1px;background:#dcdcdc"></div><div class="a" style="left:239px;top:561px;width:710px;height:1px;background:#dcdcdc"></div><div class="a" style="left:239px;top:587px;width:710px;height:1px;background:#dcdcdc"></div><div class="a" style="left:239px;top:621px;width:710px;height:1px;background:#dcdcdc"></div><div class="a" style="left:239px;top:656px;width:710px;height:1px;background:#dcdcdc"></div><div class="a" style="left:239px;top:681px;width:710px;height:1px;background:#dcdcdc"></div><div class="a th" style="left:254px;top:476.8px;font-size:13px;letter-spacing:0.2px">Total:</div>
<div class="a th" style="left:261px;top:493.0px;font-size:13px">6</div>
<div class="a th" style="left:316px;top:484.4px;letter-spacing:0.4px">Research Fields</div>
<div class="a th" style="left:452px;top:476.6px;letter-spacing:0.35px">Web of Science</div>
<div class="a th" style="left:462px;top:492.1px;letter-spacing:0.3px">Documents</div>
<div class="a th" style="left:596px;top:484.4px;color:#41709f;letter-spacing:0.2px">Cites</div>
<div class="a" style="left:636px;top:490px;width:0;height:0;border-left:4px solid transparent;border-right:4px solid transparent;border-top:4px solid #4a8ad0"></div><div class="a th" style="left:694px;top:484.4px;letter-spacing:0.3px">Cites/Paper</div>
<div class="a th" style="left:830px;top:484.4px;letter-spacing:0.1px">Top Papers</div>
<div class="a v" style="right:653px;top:514.1px;">1</div>
<div class="a f" style="left:320px;top:514.8px;">CHEMISTRY</div>
<div class="a v" style="right:385px;top:514.1px;">4,842</div>
<div class="a v" style="right:273px;top:514.1px;">56,723</div>
<div class="a v" style="right:156px;top:514.1px;">11.71</div>
<div class="a bar" style="top:513px"><b style="width:35px"></b><span style="color:#555">40</span></div><div class="a v" style="right:653px;top:540.1px;">2</div>
<div class="a f" style="left:320px;top:540.8px;">ENGINEERING</div>
<div class="a v" style="right:385px;top:540.1px;">5,667</div>
<div class="a v" style="right:273px;top:540.1px;">49,777</div>
<div class="a v" style="right:156px;top:540.1px;">8.78</div>
<div class="a bar" style="top:539px"><b style="width:98px"></b><span style="color:#fff">112</span></div><div class="a v" style="right:653px;top:566.1px;">3</div>
<div class="a f" style="left:320px;top:566.8px;">GEOSCIENCES</div>
<div class="a v" style="right:385px;top:566.1px;">4,704</div>
<div class="a v" style="right:273px;top:566.1px;">33,987</div>
<div class="a v" style="right:156px;top:566.1px;">7.23</div>
<div class="a bar" style="top:565px"><b style="width:60px"></b><span style="color:#555">69</span></div><div class="a v" style="right:653px;top:597.1px;">4</div>
<div class="a f" style="left:320px;top:590.3px;">MATERIALS</div>
<div class="a f" style="left:320px;top:603.3px;">SCIENCE</div>
<div class="a v" style="right:385px;top:597.1px;">2,074</div>
<div class="a v" style="right:273px;top:597.1px;">31,444</div>
<div class="a v" style="right:156px;top:597.1px;">15.16</div>
<div class="a bar" style="top:595px"><b style="width:21px"></b><span style="color:#555">24</span></div><div class="a v" style="right:653px;top:630.1px;">5</div>
<div class="a f" style="left:320px;top:624.8px;">COMPUTER</div>
<div class="a f" style="left:320px;top:637.8px;">SCIENCE</div>
<div class="a v" style="right:385px;top:630.1px;">491</div>
<div class="a v" style="right:273px;top:630.1px;">4,059</div>
<div class="a v" style="right:156px;top:630.1px;">8.27</div>
<div class="a bar" style="top:629px"><b style="width:8px"></b><span style="color:#555">9</span></div><div class="a v" style="right:653px;top:660.1px;">0</div>
<div class="a f" style="left:320px;top:660.8px;">ALL FIELDS</div>
<div class="a v" style="right:385px;top:660.1px;">20,324</div>
<div class="a v" style="right:273px;top:660.1px;">195,820</div>
<div class="a v" style="right:156px;top:660.1px;">9.63</div>
<div class="a bar" style="top:659px"><b style="width:98px"></b><span style="color:#fff">297</span></div><div class="a" style="left:287px;top:620px;width:661px;height:36px;border:1px solid #e03c3c"></div><div class="a" style="left:20px;top:186px;width:197px;height:33px;border:1px solid #e23a3a;background:linear-gradient(#f6f6f6 0%,#eeeeee 50%,#e4e4e4 51%,#e8e8e8 100%);box-shadow:0 1px 1px rgba(0,0,0,0.25)"></div><svg class="a" style="left:27px;top:194px" width="8" height="8"><path d="M1,1 L7,7 M7,1 L1,7" stroke="#8a8a8a" stroke-width="2"/></svg><div class="a " style="left:39px;top:190.0px;font-size:13.6px;color:#222;letter-spacing:-0.33px">CHINA UNIVERSITY OF</div>
<div class="a " style="left:39px;top:203.0px;font-size:13.6px;color:#222;letter-spacing:-0.33px">PETROLEUM</div>
</body></html>
